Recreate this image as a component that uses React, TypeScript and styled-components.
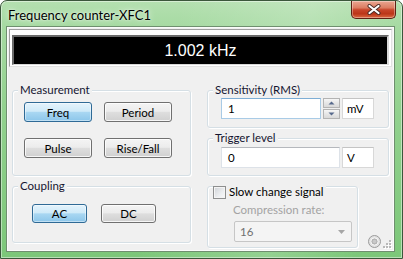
import React from "react";
import styled, { createGlobalStyle } from "styled-components";

const GlobalStyle = createGlobalStyle`
  html, body {
    margin: 0;
    padding: 0;
    background: #ffffff;
  }
  body {
    font-family: Lato, "Liberation Sans", sans-serif;
  }
`;

const UI_FONT = `Lato, "Liberation Sans", sans-serif`;

const Frame = styled.div`
  position: relative;
  width: 403px;
  height: 259px;
  box-sizing: border-box;
  border: 1px solid #3b573b;
  border-radius: 7px 7px 0 0;
  padding: 0 8px 7px 6px;
  display: flex;
  flex-direction: column;
  overflow: hidden;
  background:
    linear-gradient(100deg, rgba(255, 255, 255, 0) 40%, rgba(255, 255, 255, 0.18) 70%, rgba(255, 255, 255, 0) 90%),
    linear-gradient(180deg, #b4e0b0 0px, #a6daa2 26px, #92d18e 110px, #7cc779 100%);
  box-shadow: inset 0 0 0 1px rgba(255, 255, 255, 0.45);
`;

const TitleBar = styled.div`
  height: 26px;
  display: flex;
  align-items: flex-start;
  justify-content: space-between;
`;

const TitleText = styled.div`
  padding: 7px 0 0 1px;
  font: 13px ${UI_FONT};
  line-height: 15px;
  color: #000;
  text-shadow: 0 0 6px rgba(255, 255, 255, 0.9), 0 0 2px rgba(255, 255, 255, 0.8);
`;

const CloseButton = styled.div`
  width: 45px;
  height: 18px;
  margin-right: -2px;
  box-sizing: border-box;
  border: 1px solid #5e2014;
  border-top: none;
  border-radius: 0 0 5px 5px;
  display: flex;
  align-items: center;
  justify-content: center;
  background: linear-gradient(180deg, #eaa792 0%, #dc7d62 40%, #c8452a 52%, #bb3518 75%, #dc6a42 100%);
  box-shadow: inset 0 0 0 1px rgba(255, 255, 255, 0.35);
`;

const Client = styled.div`
  position: relative;
  flex: 1;
  background: #f0f0f0;
  border: 1px solid #fafcfa;
  box-shadow: 0 0 0 1px #6f8f6f;
  display: flex;
  flex-direction: column;
`;

const Display = styled.div`
  margin: 1px 1px 0 1px;
  background: #ffffff;
  border-top: 1px solid #a0a0a0;
  border-left: 1px solid #a0a0a0;
  border-right: 1px solid #e2e2e2;
  border-bottom: 1px solid #e2e2e2;
  padding: 5px 2px 1px 2px;
`;

const Readout = styled.div`
  height: 27px;
  background: #000;
  border: 2px solid #6a6a6a;
  border-right-color: #d8d8d8;
  border-bottom: 1px solid #d8d8d8;
  color: #fff;
  font: 16px "Liberation Sans", Arial, sans-serif;
  display: flex;
  align-items: center;
  justify-content: center;
`;

const Columns = styled.div`
  margin-top: 23px;
  padding: 0 4px;
  display: grid;
  grid-template-columns: 179px 182px;
  column-gap: 16px;
`;

const Column = styled.div`
  display: flex;
  flex-direction: column;
  gap: 10px;
`;

const Group = styled.div<{ $h: number; $w?: number }>`
  box-sizing: border-box;
  height: ${(p) => p.$h}px;
  width: ${(p) => (p.$w ? `${p.$w}px` : "auto")};
  border: 1px solid #d5dfe5;
  border-radius: 3px;
  box-shadow: inset 1px 1px 0 #ffffff, 1px 1px 0 #ffffff;
  display: flex;
  flex-direction: column;
  align-items: flex-start;
`;

const Legend = styled.div`
  margin: -8px 0 0 5px;
  padding: 0 2px;
  background: #f0f0f0;
  font: 11.5px ${UI_FONT};
  line-height: 14px;
  color: #151530;
`;

const CheckLegend = styled.label`
  margin: -2px 0 0 5px;
  padding: 0 2px 0 0;
  background: #f0f0f0;
  display: flex;
  align-items: center;
  gap: 3px;
  font: 11.5px ${UI_FONT};
  line-height: 14px;
  color: #000;
`;

const CheckBox = styled.span`
  width: 13px;
  height: 13px;
  box-sizing: border-box;
  border: 1px solid #8e8f8f;
  background: linear-gradient(135deg, #cfd2d6 0%, #eceef0 60%, #fafafa 100%);
  box-shadow: inset 0 0 0 1px #f4f4f4;
`;

const ButtonGrid = styled.div<{ $cols: string; $gap: number; $rowGap?: number; $top: number; $left: number }>`
  display: grid;
  grid-template-columns: ${(p) => p.$cols};
  column-gap: ${(p) => p.$gap}px;
  row-gap: ${(p) => p.$rowGap ?? 0}px;
  margin: ${(p) => p.$top}px 0 0 ${(p) => p.$left}px;
`;

const PushButton = styled.button<{ $active?: boolean; $h: number }>`
  box-sizing: border-box;
  height: ${(p) => p.$h}px;
  margin: 0;
  padding: 0;
  font: 11.5px ${UI_FONT};
  color: #000;
  border: 1px solid ${(p) => (p.$active ? "#2f6a96" : "#707070")};
  border-radius: 3px;
  background: ${(p) =>
    p.$active
      ? "linear-gradient(180deg, #e4f3fc 0%, #cfeaf8 46%, #a9d7f2 52%, #8cc6ea 100%)"
      : "linear-gradient(180deg, #f4f4f4 0%, #ececec 46%, #dedede 52%, #d0d0d0 100%)"};
  box-shadow: inset 0 0 0 1px rgba(255, 255, 255, ${(p) => (p.$active ? 0.45 : 0.8)});
`;

const FieldRow = styled.div<{ $top: number }>`
  display: flex;
  align-items: flex-start;
  gap: 2px;
  margin: ${(p) => p.$top}px 0 0 13px;
`;

const TextBox = styled.div<{ $w: number; $focus?: boolean }>`
  box-sizing: border-box;
  width: ${(p) => p.$w}px;
  height: 21px;
  background: #fff;
  border: 1px solid ${(p) => (p.$focus ? "#a9cbe6" : "#dde2e8")};
  border-top-color: ${(p) => (p.$focus ? "#7eaed5" : "#b5b8bd")};
  padding-left: 6px;
  font: 11.5px ${UI_FONT};
  line-height: 19px;
  color: #000;
`;

const UnitBox = styled(TextBox)`
  padding-left: 4px;
  border-color: #d8d8d8;
  border-top-color: #c4c4c4;
`;

const Spinner = styled.div`
  display: flex;
  flex-direction: column;
  gap: 1px;
`;

const SpinButton = styled.div`
  box-sizing: border-box;
  width: 17px;
  height: 10px;
  border: 1px solid #b3b3b3;
  background: linear-gradient(180deg, #f6f6f6 0%, #e6e6e6 50%, #d9d9d9 100%);
  display: flex;
  align-items: center;
  justify-content: center;
`;

const DisabledLabel = styled.div`
  margin: 4px 0 0 25px;
  font: 11.5px ${UI_FONT};
  line-height: 14px;
  color: #a3a3a3;
`;

const ComboBox = styled.div`
  box-sizing: border-box;
  width: 118px;
  height: 21px;
  margin: 4px 0 0 26px;
  padding: 0 6px 0 5px;
  border: 1px solid #c6c6c6;
  border-radius: 2px;
  background: #f4f4f4;
  display: flex;
  align-items: center;
  justify-content: space-between;
  font: 11.5px ${UI_FONT};
  color: #707070;
`;

const BottomRow = styled.div`
  display: flex;
  align-items: flex-end;
`;

const StatusLamp = styled.div`
  margin: 0 0 0 10px;
  width: 13px;
  height: 13px;
  display: flex;
`;

const Grip = styled.div`
  position: absolute;
  right: 1px;
  bottom: 1px;
  width: 10px;
  height: 10px;
  display: flex;
`;

function Arrow({ up }: { up?: boolean }) {
  return (
    <svg width="7" height="4" viewBox="0 0 7 4">
      <path d={up ? "M0.5 3.5 L3.5 0.5 L6.5 3.5 Z" : "M0.5 0.5 L3.5 3.5 L6.5 0.5 Z"} fill="#56698c" />
    </svg>
  );
}

export default function App() {
  return (
    <>
      <GlobalStyle />
      <Frame>
        <TitleBar>
          <TitleText>Frequency counter-XFC1</TitleText>
          <CloseButton>
            <svg width="14" height="11" viewBox="0 0 14 11">
              <path d="M2.5 2 L11.5 9 M11.5 2 L2.5 9" stroke="#4a2a24" strokeWidth="4" strokeLinecap="round" />
              <path d="M2.5 2 L11.5 9 M11.5 2 L2.5 9" stroke="#ffffff" strokeWidth="2.2" strokeLinecap="round" />
            </svg>
          </CloseButton>
        </TitleBar>
        <Client>
          <Display>
            <Readout>1.002 kHz</Readout>
          </Display>
          <Columns>
            <Column>
              <Group $h={86}>
                <Legend>Measurement</Legend>
                <ButtonGrid $cols="68px 68px" $gap={12} $rowGap={16} $top={5} $left={11}>
                  <PushButton $h={20} $active>Freq</PushButton>
                  <PushButton $h={20}>Period</PushButton>
                  <PushButton $h={20}>Pulse</PushButton>
                  <PushButton $h={20}>Rise/Fall</PushButton>
                </ButtonGrid>
              </Group>
              <Group $h={57}>
                <Legend>Coupling</Legend>
                <ButtonGrid $cols="55px 55px" $gap={14} $top={11} $left={19}>
                  <PushButton $h={19} $active>AC</PushButton>
                  <PushButton $h={19}>DC</PushButton>
                </ButtonGrid>
              </Group>
            </Column>
            <Column>
              <Group $h={38}>
                <Legend>Sensitivity (RMS)</Legend>
                <FieldRow $top={1}>
                  <TextBox $w={100} $focus>1</TextBox>
                  <Spinner>
                    <SpinButton>
                      <Arrow up />
                    </SpinButton>
                    <SpinButton>
                      <Arrow />
                    </SpinButton>
                  </Spinner>
                  <UnitBox $w={32}>mV</UnitBox>
                </FieldRow>
              </Group>
              <Group $h={38}>
                <Legend>Trigger level</Legend>
                <FieldRow $top={2}>
                  <TextBox $w={119}>0</TextBox>
                  <UnitBox $w={32}>V</UnitBox>
                </FieldRow>
              </Group>
              <BottomRow>
                <Group $h={62} $w={151}>
                  <CheckLegend>
                    <CheckBox />
                    Slow change signal
                  </CheckLegend>
                  <DisabledLabel>Compression rate:</DisabledLabel>
                  <ComboBox>
                    <span>16</span>
                    <svg width="7" height="4" viewBox="0 0 7 4">
                      <path d="M0 0 L7 0 L3.5 4 Z" fill="#a6a6a6" />
                    </svg>
                  </ComboBox>
                </Group>
                <StatusLamp>
                  <svg width="13" height="13" viewBox="0 0 13 13">
                    <circle cx="6.5" cy="6.5" r="6" fill="#e2e2e2" stroke="#9a9a9a" />
                    <circle cx="6.5" cy="6.5" r="3.6" fill="#b4b4b4" stroke="#f8f8f8" strokeWidth="1" />
                    <circle cx="6.5" cy="6.5" r="1.8" fill="#c9c9c9" />
                  </svg>
                </StatusLamp>
              </BottomRow>
            </Column>
          </Columns>
          <Grip>
            <svg width="10" height="10" viewBox="0 0 10 10">
              {[
                [7, 1],
                [7, 4],
                [4, 4],
                [7, 7],
                [4, 7],
                [1, 7],
              ].map(([x, y]) => (
                <g key={`${x}-${y}`}>
                  <rect x={x + 1} y={y + 1} width="2" height="2" fill="#ffffff" />
                  <rect x={x} y={y} width="2" height="2" fill="#b8b8b8" />
                </g>
              ))}
            </svg>
          </Grip>
        </Client>
      </Frame>
    </>
  );
}
